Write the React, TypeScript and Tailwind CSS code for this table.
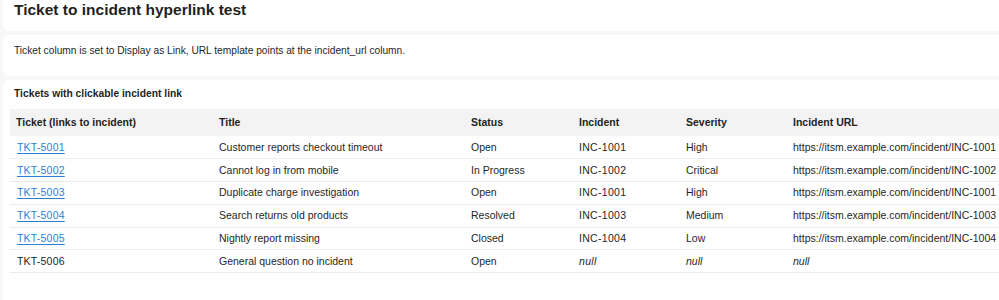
import React from 'react';

const rows = [
  { ticket: 'TKT-5001', link: true, title: 'Customer reports checkout timeout', status: 'Open', incident: 'INC-1001', severity: 'High' },
  { ticket: 'TKT-5002', link: true, title: 'Cannot log in from mobile', status: 'In Progress', incident: 'INC-1002', severity: 'Critical' },
  { ticket: 'TKT-5003', link: true, title: 'Duplicate charge investigation', status: 'Open', incident: 'INC-1001', severity: 'High' },
  { ticket: 'TKT-5004', link: true, title: 'Search returns old products', status: 'Resolved', incident: 'INC-1003', severity: 'Medium' },
  { ticket: 'TKT-5005', link: true, title: 'Nightly report missing', status: 'Closed', incident: 'INC-1004', severity: 'Low' },
  { ticket: 'TKT-5006', link: false, title: 'General question no incident', status: 'Open', incident: null, severity: null },
];

const Null = () => <span className="italic">null</span>;

const App: React.FC = () => {
  return (
    <div className="min-h-[300px] bg-[#f7f7f7] pl-[3px] flex flex-col gap-[4px] font-['Liberation_Sans',Arial,sans-serif] text-[#1f1f1f] overflow-hidden">
      <div className="bg-white h-[31px] rounded-bl-md px-[11px]">
        <h1 className="text-[15.5px] font-bold leading-[20px]">Ticket to incident hyperlink test</h1>
      </div>

      <div className="bg-white h-[41px] rounded-l-md px-[11px] pt-[9px]">
        <p className="text-[10.2px] leading-[14px]">
          Ticket column is set to Display as Link, URL template points at the incident_url column.
        </p>
      </div>

      <div className="bg-white flex-1 rounded-tl-md pl-[7px] pt-[7px] pb-[20px]">
        <h2 className="text-[10.3px] font-bold leading-[13px] px-[4px] mb-[9px]">Tickets with clickable incident link</h2>
        <table className="w-[1000px] table-fixed border-collapse text-[10.5px] leading-[13px]">
          <colgroup>
            <col className="w-[203px]" />
            <col className="w-[252px]" />
            <col className="w-[108px]" />
            <col className="w-[107px]" />
            <col className="w-[107px]" />
            <col />
          </colgroup>
          <thead>
            <tr className="bg-[#f3f3f3] h-[27px]">
              <th className="text-left font-bold px-[6px]">Ticket (links to incident)</th>
              <th className="text-left font-bold px-[6px]">Title</th>
              <th className="text-left font-bold px-[6px]">Status</th>
              <th className="text-left font-bold px-[6px]">Incident</th>
              <th className="text-left font-bold px-[6px]">Severity</th>
              <th className="text-left font-bold px-[6px]">Incident URL</th>
            </tr>
          </thead>
          <tbody>
            {rows.map((r) => (
              <tr key={r.ticket} className="h-[22.8px] border-b border-[#ececec]">
                <td className="px-[7px] whitespace-nowrap tracking-[0.2px]">
                  {r.link ? (
                    <a href="#" className="text-[#2f7fd1] underline underline-offset-2">{r.ticket}</a>
                  ) : (
                    r.ticket
                  )}
                </td>
                <td className="px-[6px] whitespace-nowrap">{r.title}</td>
                <td className="px-[6px] whitespace-nowrap">{r.status}</td>
                <td className="px-[6px] whitespace-nowrap tracking-[0.3px]">{r.incident ?? <Null />}</td>
                <td className="px-[6px] whitespace-nowrap">{r.severity ?? <Null />}</td>
                <td className="px-[6px] whitespace-nowrap">
                  {r.incident ? `https://itsm.example.com/incident/${r.incident}` : <Null />}
                </td>
              </tr>
            ))}
          </tbody>
        </table>
      </div>
    </div>
  );
};

export default App;
